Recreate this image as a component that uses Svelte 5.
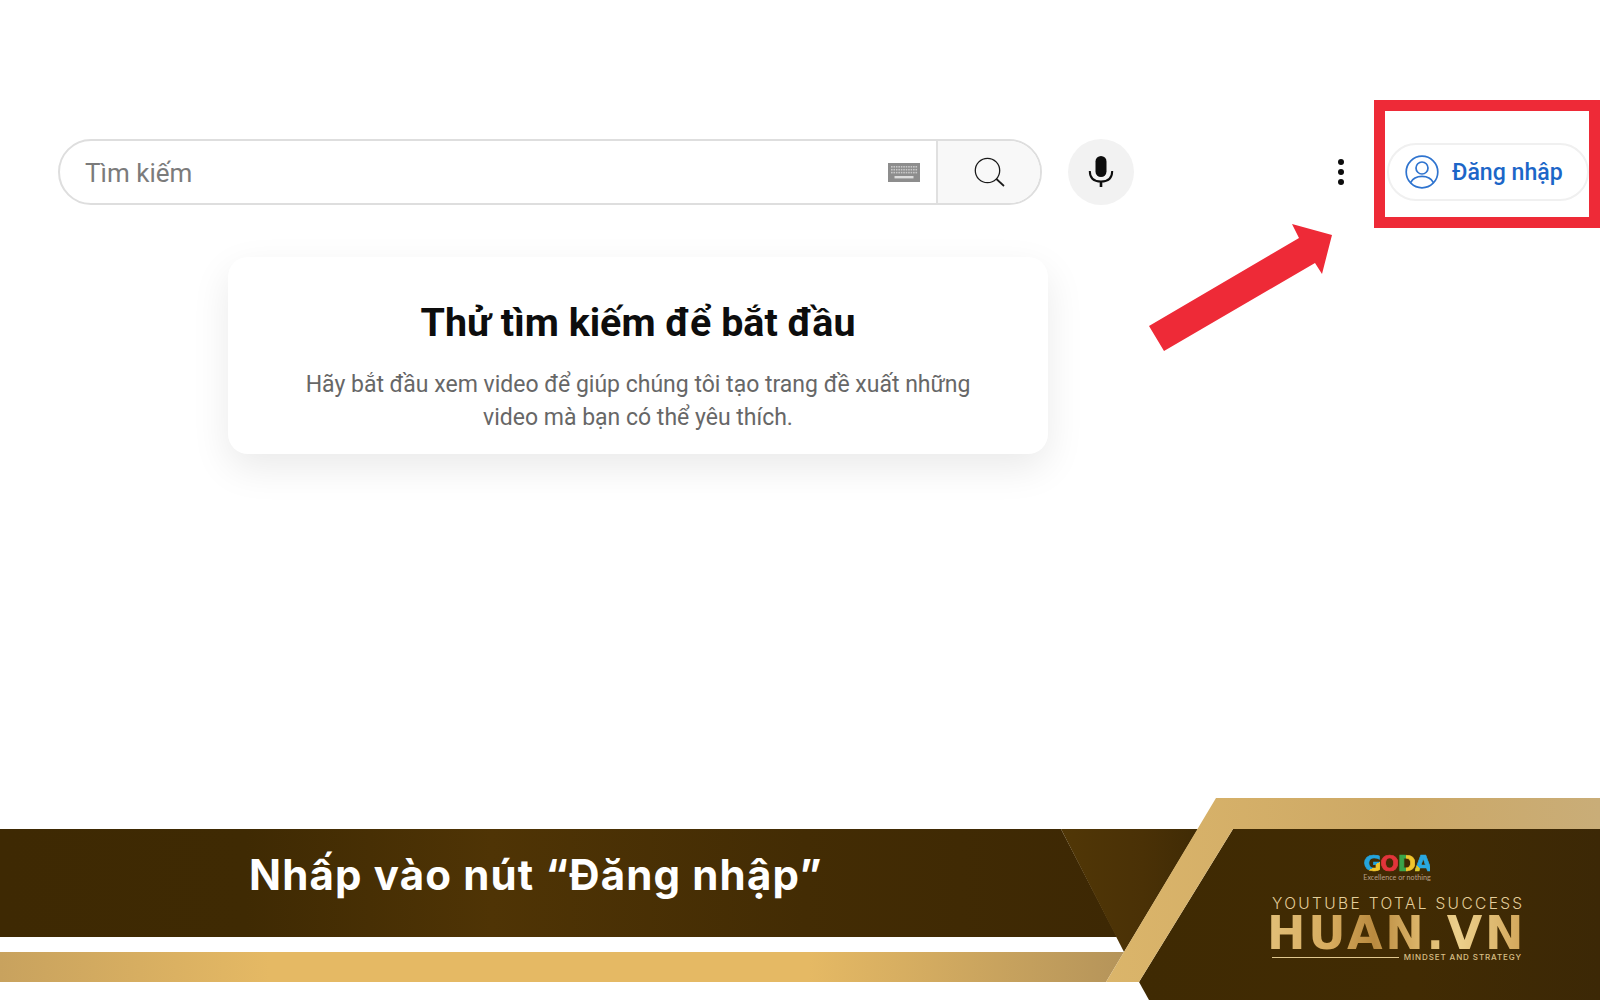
<script>
  const keyRows = [0, 1, 2];
  const keyCols = Array.from({ length: 11 }, (_, i) => i);
</script>

<div class="page">
  <header class="topbar">
    <div class="search-row">
      <div class="search">
        <div class="field">
          <span class="placeholder">Tìm kiếm</span>
          <svg class="keyboard" width="32" height="19" viewBox="0 0 32 19" aria-hidden="true">
            <rect width="32" height="19" fill="#8d8d8d" />
            {#each keyRows as r}
              {#each keyCols as c}
                <rect x={3 + c * 2.45} y={3 + r * 2.9} width="1.6" height="1.6" fill="#c9c9c9" />
              {/each}
            {/each}
            <rect x="6.5" y="13" width="19" height="2.4" fill="#dcdcdc" />
          </svg>
        </div>
        <div class="search-btn">
          <svg width="34" height="34" viewBox="0 0 34 34" fill="none" stroke="#1a1a1a" aria-hidden="true">
            <circle cx="15.5" cy="15.5" r="12.2" stroke-width="1.3" />
            <path d="M24.4 24 L32 31" stroke-width="1.7" />
          </svg>
        </div>
      </div>
      <div class="mic">
        <svg width="26" height="32" viewBox="0 0 26 32" aria-hidden="true">
          <rect x="7.5" y="0" width="11" height="21" rx="5.5" fill="#0d0d0d" />
          <path d="M1.8 15 C1.8 22 6 25.6 13 25.6 C20 25.6 24.2 22 24.2 15" fill="none" stroke="#0d0d0d" stroke-width="2" />
          <rect x="11.7" y="25" width="2.6" height="6" fill="#0d0d0d" />
        </svg>
      </div>
    </div>
    <div class="dots"><i></i><i></i><i></i></div>
    <div class="frame">
      <div class="signin">
        <svg width="34" height="34" viewBox="0 0 34 34" fill="none" stroke="#2f74cf" stroke-width="1.7" aria-hidden="true">
          <circle cx="17" cy="17" r="15.8" />
          <circle cx="17" cy="13" r="6" />
          <path d="M5.6 27.6 C8 22.8 12 21.4 17 21.4 C22 21.4 26 22.8 28.4 27.6" />
        </svg>
        <span>Đăng nhập</span>
      </div>
    </div>
  </header>

  <svg class="arrow" width="200" height="140" viewBox="1140 220 200 140" aria-hidden="true">
    <polygon fill="#ee2a37" points="1149,326 1299,238 1292,224 1332,235 1322,274 1315,263 1164,351" />
  </svg>

  <main class="card">
    <h1>Thử tìm kiếm để bắt đầu</h1>
    <p>Hãy bắt đầu xem video để giúp chúng tôi tạo trang đề xuất những<br />video mà bạn có thể yêu thích.</p>
  </main>

  <footer class="footer">
    <svg class="footer-art" width="1600" height="202" viewBox="0 798 1600 202" aria-hidden="true">
      <defs>
        <linearGradient id="brown" x1="0" x2="1" y1="0" y2="0">
          <stop offset="0" stop-color="#3e2903" />
          <stop offset="0.22" stop-color="#3f2a03" />
          <stop offset="0.44" stop-color="#4f3405" />
          <stop offset="0.72" stop-color="#432c04" />
          <stop offset="1" stop-color="#3d2804" />
        </linearGradient>
        <linearGradient id="strip" x1="0" x2="1" y1="0" y2="0">
          <stop offset="0" stop-color="#c8a25e" />
          <stop offset="0.24" stop-color="#e5b964" />
          <stop offset="0.72" stop-color="#e5b964" />
          <stop offset="1" stop-color="#b5945a" />
        </linearGradient>
        <linearGradient id="band" x1="0" x2="1" y1="0" y2="0">
          <stop offset="0" stop-color="#dbb56a" />
          <stop offset="0.6" stop-color="#cca866" />
          <stop offset="1" stop-color="#c9ad78" />
        </linearGradient>
        <linearGradient id="tri" x1="0" x2="1" y1="0" y2="0">
          <stop offset="0" stop-color="#513706" />
          <stop offset="0.6" stop-color="#4a3106" />
          <stop offset="1" stop-color="#402b05" />
        </linearGradient>
        <linearGradient id="panel" x1="0" x2="1" y1="0" y2="0">
          <stop offset="0" stop-color="#3f2a03" />
          <stop offset="0.6" stop-color="#412b03" />
          <stop offset="1" stop-color="#3c2806" />
        </linearGradient>
      </defs>
      <polygon fill="url(#brown)" points="0,829 1061,829 1117,937 0,937" />
      <polygon fill="url(#tri)" points="1061,829 1198,829 1124,952" />
      <polygon fill="url(#strip)" points="0,952 1124,952 1106,982 0,982" />
      <polygon fill="url(#panel)" points="1233,829 1600,829 1600,1000 1149,1000 1139,982" />
      <polygon fill="url(#band)" points="1216,798 1600,798 1600,829 1233,829 1139,982 1106,982" />
    </svg>

    <div class="caption">Nhấp vào nút “Đăng nhập”</div>

    <div class="brand">
      <div class="goda">
        <div class="goda-name"><span class="g">G</span><span class="o">O</span><span class="d">D</span><span class="a">A</span></div>
        <div class="goda-tag">Excellence or nothing</div>
      </div>
      <div class="yts">YOUTUBE TOTAL SUCCESS</div>
      <div class="huan">HUAN.VN</div>
      <div class="mindset"><i></i><span>MINDSET AND STRATEGY</span></div>
    </div>
  </footer>
</div>

<style>
  :global(body) {
    margin: 0;
    background: #fff;
  }
  .page {
    position: relative;
    width: 1600px;
    height: 1000px;
    overflow: hidden;
    display: flex;
    flex-direction: column;
    font-family: Roboto, "Liberation Sans", sans-serif;
    background: #fff;
  }
  .topbar {
    display: flex;
    align-items: flex-start;
    padding: 100px 0 0 58px;
    height: 128px;
  }
  .search-row {
    display: flex;
    gap: 26px;
    margin-top: 39px;
  }
  .search {
    display: flex;
    width: 984px;
    height: 66px;
    box-sizing: border-box;
    border: 2px solid #dedede;
    border-radius: 33px;
    overflow: hidden;
    background: #fff;
  }
  .field {
    flex: 1;
    display: flex;
    align-items: center;
    justify-content: space-between;
    padding: 0 16px 0 25px;
  }
  .placeholder {
    font-size: 26px;
    color: #7b7b7b;
    padding-top: 2px;
  }
  .keyboard {
    display: block;
    margin-top: 1px;
  }
  .search-btn {
    width: 104px;
    display: flex;
    align-items: center;
    justify-content: center;
    background: #f8f8f8;
    border-left: 2px solid #e0e0e0;
    box-sizing: border-box;
  }
  .mic {
    width: 66px;
    height: 66px;
    border-radius: 50%;
    background: #f2f2f2;
    display: flex;
    align-items: center;
    justify-content: center;
  }
  .dots {
    display: flex;
    flex-direction: column;
    gap: 4px;
    margin: 59px 30px 0 auto;
  }
  .dots i {
    width: 6px;
    height: 6px;
    border-radius: 50%;
    background: #0d0d0d;
  }
  .frame {
    box-sizing: border-box;
    width: 226px;
    height: 128px;
    border: 11px solid #ee2a37;
    padding: 32px 0 0 2px;
  }
  .signin {
    box-sizing: border-box;
    width: 202px;
    height: 58px;
    border: 2px solid #f0f0f0;
    border-radius: 29px;
    display: flex;
    align-items: center;
    gap: 13px;
    padding-left: 16px;
    color: #1c66c8;
    font-size: 23.1px;
    font-weight: 500;
  }
  .signin svg {
    flex: none;
  }
  .arrow {
    position: absolute;
    left: 1140px;
    top: 220px;
  }
  .card {
    box-sizing: border-box;
    width: 820px;
    height: 197px;
    margin: 29px 0 0 228px;
    border-radius: 20px;
    background: #fff;
    box-shadow: 0 14px 38px rgba(0, 0, 0, 0.085);
    text-align: center;
    padding-top: 42px;
  }
  .card h1 {
    margin: 0;
    font-size: 39.4px;
    line-height: 48px;
    font-weight: 700;
    color: #0d0d0d;
  }
  .card p {
    margin: 22px 0 0;
    font-size: 23px;
    line-height: 32.5px;
    color: #676767;
  }
  .footer {
    position: relative;
    margin-top: auto;
    height: 202px;
    display: flex;
  }
  .footer-art {
    position: absolute;
    left: 0;
    top: 0;
    display: block;
  }
  .caption {
    position: relative;
    margin: 31px 0 0 249px;
    height: 90px;
    display: flex;
    align-items: center;
    color: #fff;
    font-family: Inter, sans-serif;
    font-size: 42px;
    font-weight: 700;
    letter-spacing: 1.15px;
  }
  .brand {
    position: absolute;
    left: 1272px;
    top: 56px;
    width: 250px;
    display: flex;
    flex-direction: column;
  }
  .goda {
    align-self: center;
    display: flex;
    flex-direction: column;
    align-items: center;
  }
  .goda-name {
    font-family: "DejaVu Sans", sans-serif;
    font-weight: 700;
    font-size: 22px;
    line-height: 20px;
    letter-spacing: -1.3px;
  }
  .goda-name span {
    -webkit-text-stroke: 0.7px transparent;
    -webkit-background-clip: text;
    background-clip: text;
    color: transparent;
  }
  .g {
    background-image: linear-gradient(140deg, #24a4dc 62%, #f0c52c 62%);
  }
  .o {
    background-image: linear-gradient(#e2343a, #e2343a);
  }
  .d {
    background-image: linear-gradient(90deg, #3aa54a 50%, #f0c52c 50%);
  }
  .a {
    background-image: linear-gradient(230deg, #29a8e0 70%, #d9c92c 70%);
  }
  .goda-tag {
    font-family: Lato, sans-serif;
    font-size: 7.2px;
    line-height: 7px;
    color: #b9a088;
  }
  .yts {
    margin-top: 15px;
    font-family: Inter, sans-serif;
    font-weight: 300;
    font-size: 15.5px;
    line-height: 16px;
    letter-spacing: 2.35px;
    color: #e5cf9b;
    white-space: nowrap;
  }
  .huan {
    margin: 3px 0 0 -5px;
    font-family: "DejaVu Sans", sans-serif;
    font-weight: 700;
    font-size: 46px;
    line-height: 37px;
    letter-spacing: 2.75px;
    white-space: nowrap;
    background: linear-gradient(90deg, #e2bf78 0%, #d6ab5e 25%, #b98a3f 42%, #dcb56a 60%, #ecd08c 75%, #d3a75b 100%);
    -webkit-background-clip: text;
    background-clip: text;
    color: transparent;
  }
  .mindset {
    display: flex;
    align-items: center;
    gap: 5px;
  }
  .mindset i {
    flex: 1;
    height: 1px;
    background: #e0c88f;
  }
  .mindset span {
    font-family: Inter, sans-serif;
    font-size: 8px;
    line-height: 10px;
    font-weight: 500;
    letter-spacing: 0.9px;
    color: #d9bf85;
    white-space: nowrap;
  }
</style>
